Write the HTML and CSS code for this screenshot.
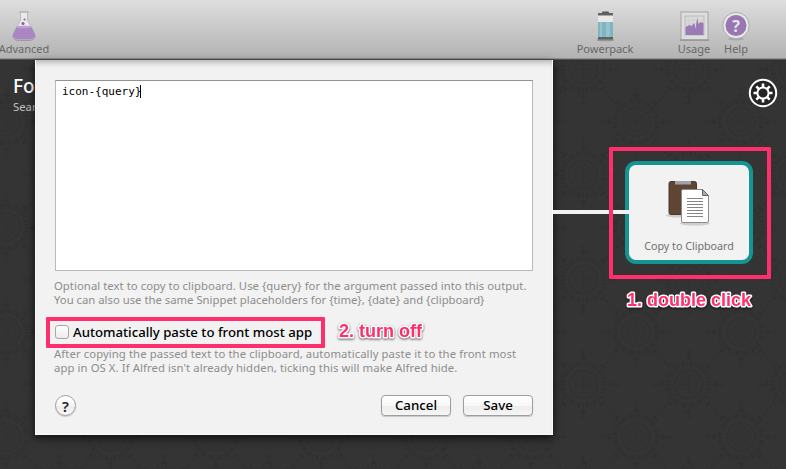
FILE: index.html
```html
<!DOCTYPE html>
<html lang="en">
<head>
<meta charset="utf-8">
<title>Workflow</title>
<link rel="stylesheet" href="styles.css">
</head>
<body>
<header class="toolbar">
  <div class="tool advanced">
    <svg width="28" height="32" viewBox="0 0 28 32"><ellipse cx="14" cy="29.500" rx="10" ry="1.600" fill="#777" opacity=".5"/><path d="M10.500 2h7v8l7 14q2 5-4 5.300H7.500q-6-.3-4-5.300l7-14z" fill="#e9e8eb" stroke="#b3b0b5" stroke-width=".8"/><path d="M6.500 17h15l3.500 7q2 4.500-4 5H7q-6-.5-4-5z" fill="#aa86c2"/><ellipse cx="14" cy="17" rx="7.500" ry="1.300" fill="#bda1cf"/><path d="M9 2h10" stroke="#b8b8b8" stroke-width="1.500"/><circle cx="13" cy="13.500" r="1.500" fill="#8e5aa9"/><circle cx="14.500" cy="9.500" r="1" fill="#8e5aa9"/></svg>
    <span>Advanced</span>
  </div>
  <div class="tool powerpack">
    <svg width="20" height="32" viewBox="0 0 20 32"><ellipse cx="10.500" cy="30" rx="9" ry="1.300" fill="#777" opacity=".6"/><rect x="7" y="1.500" width="7" height="3" rx="1" fill="#555"/><rect x="3" y="3" width="15" height="26" rx="1" fill="#e8e8e8"/><path d="M3 3h15v2.500H3zM3 27h15v2.500H3z" fill="#626262"/><path d="M3 12h15v15H3z" fill="#7fb5c0"/><path d="M5 12h2v15H5zm6 0h4v15h-4z" fill="#94c4cc"/></svg>
    <span>Powerpack</span>
  </div>
  <div class="tool usage">
    <svg width="30" height="32" viewBox="0 0 30 32"><path d="M1 30h29" stroke="#888" stroke-width="1.400"/><rect x="2" y="2" width="27" height="27.500" fill="#dedede" stroke="#a5a5a5"/><rect x="6" y="6" width="19" height="19" fill="#dadada" stroke="#bbb"/><path d="M6 10h19M6 14h19M10 6v18M14 6v18M18 6v18" stroke="#c6c6c6" stroke-width=".5"/><path d="M6.500 25v-8l2-1 2-1 2 1 2-2 1-1 1 6 1-7 1-4 1 6 2-2 3 1v12z" fill="#9b7bb5"/></svg>
    <span>Usage</span>
  </div>
  <div class="tool help">
    <svg width="30" height="32" viewBox="0 0 30 32"><ellipse cx="15" cy="29" rx="8" ry="1.500" fill="#777" opacity=".35"/><circle cx="15" cy="15.500" r="13.200" fill="#e8e8e8" stroke="#aaa"/><circle cx="15" cy="15.500" r="10.500" fill="#9876b2"/><text x="15" y="21.500" class="help-mark">?</text></svg>
    <span>Help</span>
  </div>
</header>
<main class="workspace">
  <svg class="damask" width="786" height="409">
    <defs>
      <g id="medallion" fill="none" stroke="#2d2d2e">
        <circle r="14" stroke-width="2" stroke-dasharray="3 1.500"/><circle r="9" stroke-width=".6"/>
        <path d="M-10 0H10M0-10V10M-7-7 7 7M-7 7 7-7" stroke-width=".8"/>
        <circle r="21" stroke-width="5" stroke-dasharray="1.500 2 3 1.500"/>
        <circle r="27" stroke-width="3" stroke-dasharray="6 15.200" stroke-dashoffset="3"/>
        <path d="M0 24v12m-4-2q4 0 4-5 0 5 4 5M0-24v-12m-4 2q4 0 4 5 0-5 4-5M24 0h12m-2-4q0 4-5 4 5 0 5 4M-24 0h-12m2-4q0 4 5 4-5 0-5 4"/>
        <path d="m18 18 9 7m-45-7-9 7m45-43 9-7m-45 7-9-7" stroke-dasharray="3 2" stroke-width="2"/>
      </g>
      <pattern id="tiles" x="6" y="62" width="105" height="105" patternUnits="userSpaceOnUse">
        <use href="#medallion"/><use href="#medallion" x="105"/><use href="#medallion" y="105"/><use href="#medallion" x="105" y="105"/><use href="#medallion" x="52.500" y="52.500"/>
      </pattern>
    </defs>
    <rect width="786" height="409" fill="url(#tiles)"/>
  </svg>
  <section class="heading"><h1>Fo</h1><p>Sear</p></section>
  <section class="dialog">
    <div class="editor">icon-{query}<i class="caret"></i></div>
    <p class="hint"><span class="use">Optional text to copy to clipboard. Use {query} for the argument passed into this output.</span><br><span class="placeholders">You can also use the same Snippet placeholders for {time}, {date} and {clipboard}</span></p>
    <div class="option"><span class="checkbox"></span><span class="option-label">Automatically paste to front most app</span></div>
    <p class="hint second">After copying the passed text to the clipboard, automatically paste it to the front most<br>app in OS X. If Alfred isn't already hidden, ticking this will make Alfred hide.</p>
    <div class="actions"><button class="round">?</button><button class="push cancel">Cancel</button><button class="push">Save</button></div>
  </section>
  <svg class="gear" width="30" height="30" viewBox="-15 -15 30 30"><circle r="13.200" fill="#252525" stroke="#fff" stroke-width="2"/><circle r="5.600" fill="none" stroke="#fff" stroke-width="2"/><path d="M0-6v-3.500M0 6v3.500M6 0h3.500M-6 0h-3.500M4.200-4.200l2.500-2.500M-4.200-4.200l-2.500-2.500M4.200 4.200l2.500 2.500M-4.200 4.200l-2.500 2.500" stroke="#fff" stroke-width="2.600"/></svg>
  <div class="wire"></div>
  <div class="node">
    <svg width="48" height="50" viewBox="0 0 48 50"><ellipse cx="15" cy="36.500" rx="14" ry="2" fill="#999" opacity=".4"/><ellipse cx="30" cy="44.500" rx="15" ry="2" fill="#999" opacity=".4"/><rect x="4" y="2.500" width="27.500" height="33" rx="2" fill="#604532" stroke="#4d3728"/><path d="M10 2h16v3.500H10z" fill="#a1a1a7"/><path d="M17.500 10.500h20l6 6v25.500q0 1.500-1.500 1.500h-24q-1.500 0-1.500-1.500v-30q0-1.500 1.500-1.500z" fill="#fff" stroke="#8b8b8b"/><path d="M37.500 10.500v6h6z" fill="#aaa" stroke="#666"/><path d="M22 19.500h16M22 22.500h16M22 25.500h16M22 28.500h16M22 31.500h16M22 34.500h16M22 37.500h16" stroke="#858585"/></svg>
    <span>Copy to Clipboard</span>
  </div>
  <div class="mark mark-node"></div>
  <div class="mark mark-option"></div>
  <svg class="note note-one" width="140" height="28"><text x="7" y="20" textLength="124" lengthAdjust="spacingAndGlyphs">1. double click</text></svg>
  <svg class="note note-two" width="100" height="28"><text x="7" y="20" textLength="83" lengthAdjust="spacingAndGlyphs">2. turn off</text></svg>
</main>
</body>
</html>
```
FILE: styles.css
```css
* { box-sizing: border-box; }
body { margin: 0; width: 786px; height: 469px; overflow: hidden; font-family: "Noto Sans", sans-serif; }
.toolbar { height: 60px; display: flex; background: linear-gradient(#dedede, #b2b2b2); border-bottom: 1px solid #515151; box-shadow: inset 0 -1px #929292; }
.tool { display: flex; flex-direction: column; align-items: center; padding-top: 10px; font-size: 11px; line-height: 14px; color: #686868; }
.tool span { white-space: nowrap; }
.advanced { width: 50px; margin-left: -1px; }
.powerpack { width: 60px; margin-left: 526px; }
.usage { width: 36px; margin-left: 41px; }
.help { width: 32px; margin-left: 8px; }
.help-mark { font: bold 16px "Noto Sans", sans-serif; fill: #e9e5ee; text-anchor: middle; }
.workspace { position: relative; height: 409px; display: flex; align-items: flex-start; background: #343434; }
.damask { position: absolute; inset: 0; opacity: .45; }
.heading { position: relative; width: 35px; height: 60px; padding: 14px 0 0 13px; overflow: hidden; flex: none; }
.heading h1 { margin: 0; font-size: 19px; line-height: 25px; font-weight: 500; color: #fff; }
.heading p { margin: 0; font-size: 11.3px; line-height: 15px; color: #c0c0c0; }
.dialog { position: relative; flex: none; width: 518px; height: 375px; padding: 20px 19px 0 19px; background: #f2f2f2; border: 1px solid #fafafa; border-top: 0; box-shadow: 0 3px 8px rgba(0,0,0,.7), inset 0 7px 6px -5px #aaa; }
.editor { height: 191px; width: 478px; padding: 3px 6px; background: #fff; border: 1px solid #b9b9b9; border-top-color: #929292; font: 11px/16px "DejaVu Sans Mono", monospace; color: #000; }
.caret { display: inline-block; width: 1px; height: 13px; margin-left: -1px; background: #000; vertical-align: -3px; }
.hint { margin: 8px 0 0 -1px; white-space: nowrap; font-size: 11.3px; line-height: 14px; color: #8d8d8d; letter-spacing: .09px; }
.use { letter-spacing: .05px; }
.placeholders { letter-spacing: 0; }
.option { display: flex; height: 25px; margin-top: 12px; align-items: center; gap: 4px; color: #000; }
.checkbox { width: 14px; height: 14px; border: 1px solid #a6a6a6; border-radius: 3px; background: linear-gradient(#fff, #ececec); }
.option-label { font-size: 13.2px; font-weight: 500; white-space: nowrap; }
.hint.second { margin-top: 3px; }
.actions { display: flex; align-items: center; gap: 12px; margin-top: 20px; }
button { padding: 0; border: 1px solid #9e9e9e; color: #000; background: linear-gradient(#fff, #f8f8f8 50%, #ececec 51%, #f6f6f6); box-shadow: 0 1px 1px #c8c8c8; font-family: "Noto Sans", sans-serif; }
.round { width: 21px; height: 21px; border-radius: 50%; font-size: 15px; line-height: 18px; font-weight: 600; color: #222; }
.push { width: 70px; height: 21px; border-radius: 4px; font-size: 13.3px; line-height: 17px; font-weight: 500; }
.cancel { margin-left: auto; }
.gear { position: absolute; left: 748px; top: 18px; }
.wire { position: relative; width: 76px; height: 4px; margin-top: 150px; background: #f2f2f2; z-index: 1; flex: none; }
.node { width: 128px; height: 103px; margin: 101px 0 0 -4px; padding-top: 14px; display: flex; flex-direction: column; align-items: center; flex: none; background: #159494; background: #f2f2f2; border: 4px solid #159494; border-radius: 11px; position: relative; }
.node span { margin-top: 10px; font-size: 10.700px; line-height: 15px; color: #707070; white-space: nowrap; }
.mark { position: absolute; border: 4px solid #ff2f6d; z-index: 2; border-radius: 1px; }
.mark-node { left: 609px; top: 87px; width: 162px; height: 132px; }
.mark-option { left: 46px; top: 257px; width: 279px; height: 31px; }
.note { position: absolute; z-index: 2; filter: drop-shadow(0 1px 1px rgba(0,0,0,.6)); }
.note text { font: bold 18px "Liberation Sans", sans-serif; fill: #ff2f6d; stroke: #fff; stroke-width: 3px; stroke-linejoin: round; paint-order: stroke; }
.note-one { left: 620px; top: 226px; }
.note-two { left: 332px; top: 257px; }
```
